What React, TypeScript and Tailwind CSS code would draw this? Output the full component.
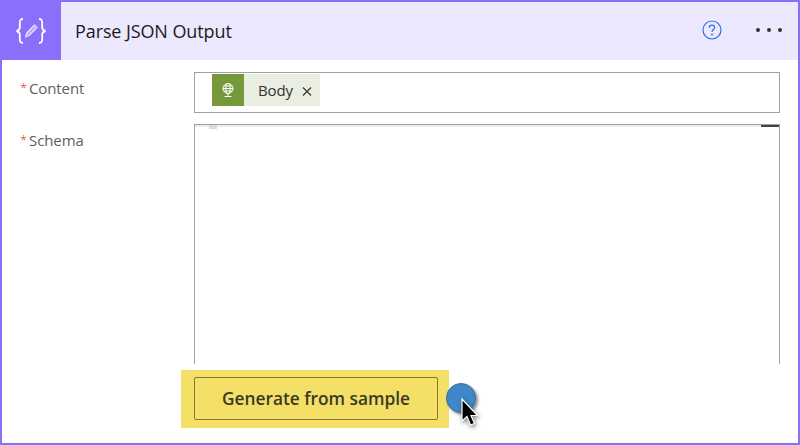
import React from "react";

export default function App() {
  return (
    <div className="relative flex h-[445px] w-[800px] flex-col overflow-hidden border-2 border-[#8a6ffb] bg-white font-['Open_Sans','Noto_Sans',sans-serif]">
      <header className="flex h-[58px] shrink-0 items-center bg-[#ece8fe]">
        <div className="flex h-full w-[59px] shrink-0 items-center justify-center bg-[#8a6ffb]">
          <svg width="32" height="28" viewBox="0 0 32 28" fill="none" className="mr-[1px]">
            <path d="M8 2C4.8 2 4.8 4 4.8 6V10.5C4.8 12.5 3.8 13.5 1.5 14C3.8 14.5 4.8 15.5 4.8 17.5V22C4.8 24 4.8 26 8 26" stroke="white" strokeWidth="1.8" />
            <path d="M24 2C27.2 2 27.2 4 27.2 6V10.5C27.2 12.5 28.2 13.5 30.5 14C28.2 14.5 27.2 15.5 27.2 17.5V22C27.2 24 27.2 26 24 26" stroke="white" strokeWidth="1.8" />
            <path d="M19.5 8L22 10.5L14 18.5L10.5 20L11.8 16Z" stroke="#e6dffd" strokeWidth="1.2" strokeLinejoin="round" fill="#b9a8fc" />
          </svg>
        </div>
        <div className="ml-[14px] text-[18px] tracking-[-0.1px] text-[#1b1b1b]">Parse JSON Output</div>
        <div className="ml-auto flex items-center">
          <svg width="20" height="20" viewBox="0 0 20 20" fill="none" className="mb-[2px] mr-[34px]">
            <circle cx="10" cy="10" r="9" stroke="#2f6bf0" strokeWidth="1.2" />
            <path d="M7.4 7.8C7.4 6.2 8.6 5.2 10 5.2C11.5 5.2 12.6 6.2 12.6 7.5C12.6 9.5 10 9.6 10 12" stroke="#2f6bf0" strokeWidth="1.2" />
            <circle cx="10" cy="14.5" r="0.9" fill="#2f6bf0" />
          </svg>
          <div className="mb-[2px] mr-[16px] flex gap-[7px]">
            <span className="h-[4px] w-[4px] rounded-full bg-[#333]" />
            <span className="h-[4px] w-[4px] rounded-full bg-[#333]" />
            <span className="h-[4px] w-[4px] rounded-full bg-[#333]" />
          </div>
        </div>
      </header>

      <div className="flex min-h-0 flex-1 flex-col pl-[18px] pr-[18px] pt-[12px]">
        <div className="flex h-[41px] shrink-0">
          <div className="flex w-[174px] shrink-0 pt-[5px] text-[15px] leading-[22px] tracking-[-0.1px] text-[#605e5c]">
            <span className="w-[9px] text-[13px] font-light text-[#d83b01]">*</span>Content
          </div>
          <div className="flex flex-1 items-start border border-[#a0a0a0] pl-[17px] pt-[1px]">
            <div className="flex h-[32px] items-center bg-[#e9eee0]">
              <div className="flex h-[32px] w-[32px] items-center justify-center bg-[#75983a]">
                <svg width="14" height="16" viewBox="0 0 14 16" fill="none" stroke="white" strokeWidth="1">
                  <circle cx="7" cy="6.5" r="5" />
                  <ellipse cx="7" cy="6.5" rx="2.2" ry="5" />
                  <path d="M2 6.5H12M2.8 4H11.2M2.8 9H11.2M7 11.5V14M3.5 14.5H10.5" />
                </svg>
              </div>
              <span className="ml-[14px] text-[15px] tracking-[-0.1px] text-[#323130]">Body</span>
              <svg width="10" height="10" viewBox="0 0 10 10" className="ml-[9px] mr-[8px] mt-[2px]" stroke="#323130" strokeWidth="1.1">
                <path d="M1 1.5L9 9.5M9 1.5L1 9.5" />
              </svg>
            </div>
          </div>
        </div>

        <div className="mt-[11px] flex min-h-0 flex-1">
          <div className="flex w-[174px] shrink-0 pt-[5px] text-[15px] leading-[22px] tracking-[-0.1px] text-[#605e5c]">
            <span className="w-[9px] text-[13px] font-light text-[#d83b01]">*</span>Schema
          </div>
          <div className="flex flex-1 flex-col border-x border-t border-[#a0a0a0]">
            <div className="flex h-[2px] items-start bg-[#eeeeee]">
              <div className="ml-[14px] h-[4px] w-[8px] bg-[#d8dcdc]" />
              <div className="ml-auto h-[2px] w-[18px] bg-[#444]" />
            </div>
          </div>
        </div>

        <div className="mb-[15px] ml-[161px] mt-[6px] flex h-[58px] w-[268px] shrink-0 items-start bg-[#f4df67] pl-[13px] pt-[7px]">
          <button className="h-[43px] w-[244px] rounded-[2px] border border-[#8a7530] text-center text-[17.3px] font-semibold text-[#3b3a28]">
            Generate from sample
          </button>
        </div>
      </div>

      <div className="absolute left-[444px] top-[381px] h-[30px] w-[30px] rounded-full border border-[#3a6f9f] bg-[#4086c8] shadow-[2px_2px_3px_rgba(0,0,0,0.45)]" />
      <svg width="20" height="30" viewBox="0 0 20 30" className="absolute left-[458px] top-[396px] drop-shadow-[1px_2px_2px_rgba(0,0,0,0.5)]">
        <path d="M2 1V23L7 18.5L10.5 27L14.5 25.5L11 17.5H17.5Z" fill="#000" stroke="#fff" strokeWidth="1.2" />
      </svg>
    </div>
  );
}
